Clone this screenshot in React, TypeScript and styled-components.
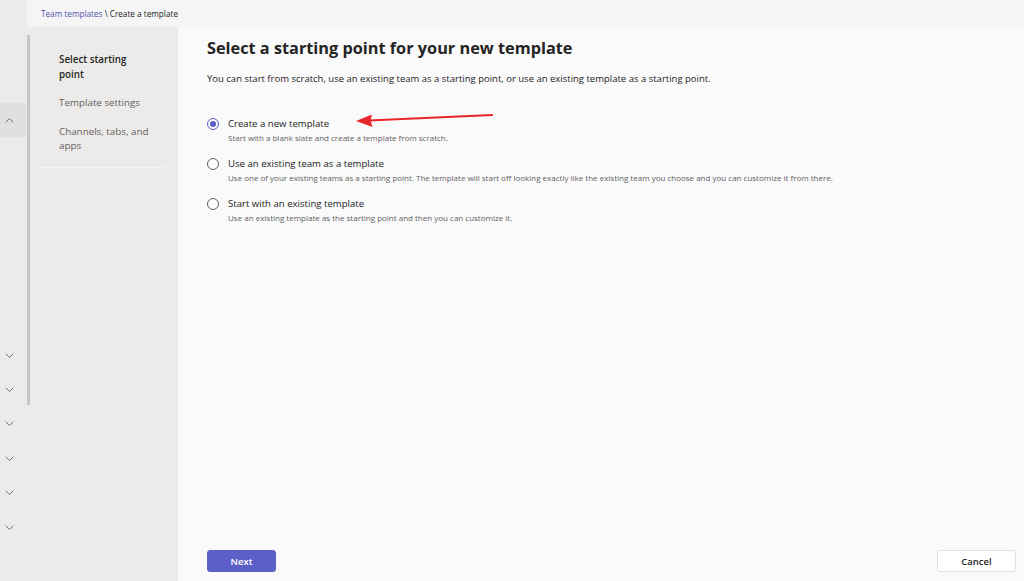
import * as React from 'react'
import styled, { createGlobalStyle } from 'styled-components'

const GlobalStyle = createGlobalStyle`
  html, body {
    margin: 0;
    padding: 0;
    height: 100%;
  }
  #root {
    height: 100%;
  }
  body {
    font-family: "Segoe UI", "Open Sans", "Noto Sans", sans-serif;
    color: #242424;
  }
`

const Page = styled.div`
  display: flex;
  width: 1024px;
  height: 581px;
  overflow: hidden;
  background: #fafafa;
`

const Rail = styled.div`
  width: 27px;
  flex: 0 0 27px;
  background: #ebebeb;
  display: flex;
  flex-direction: column;
`

const RailButton = styled.div<{ $active?: boolean }>`
  height: 34.4px;
  width: 26px;
  display: flex;
  align-items: center;
  justify-content: center;
  padding-right: 8px;
  box-sizing: border-box;
  background: ${p => (p.$active ? '#e0e0e0' : 'transparent')};
`

const RailGap = styled.div<{ $h: number }>`
  height: ${p => p.$h}px;
`

const Column = styled.div`
  flex: 1;
  display: flex;
  flex-direction: column;
`

const Header = styled.div`
  height: 27px;
  flex: 0 0 27px;
  background: #f5f5f5;
  display: flex;
  align-items: center;
  padding-left: 14px;
  font-size: 8.2px;
  color: #242424;
`

const Crumb = styled.span`
  color: #4f52b2;
`

const Body = styled.div`
  flex: 1;
  display: flex;
`

const Track = styled.div`
  width: 3px;
  flex: 0 0 3px;
  background: #edebe9;
`

const Thumb = styled.div`
  margin-top: 8px;
  height: 370px;
  background: #c7c7c7;
`

const Nav = styled.nav`
  width: 148px;
  flex: 0 0 148px;
  background: #edebe9;
  padding-top: 26px;
  box-sizing: border-box;
`

const NavList = styled.div`
  margin: 0 13px 0 10px;
  padding: 0 16px 13px 19px;
  border-bottom: 1px solid #f5f4f3;
  display: flex;
  flex-direction: column;
  gap: 14px;
`

const NavItem = styled.div<{ $current?: boolean }>`
  font-size: 9.8px;
  line-height: 14.5px;
  font-weight: ${p => (p.$current ? 600 : 400)};
  color: ${p => (p.$current ? '#242424' : '#616161')};
`

const Main = styled.main`
  flex: 1;
  display: flex;
  flex-direction: column;
  padding: 10px 8px 9px 29px;
  position: relative;
`

const Title = styled.h1`
  margin: 0;
  font-size: 16.3px;
  line-height: 22px;
  font-weight: 700;
  color: #242424;
`

const Intro = styled.p`
  margin: 13px 0 0;
  font-size: 9.5px;
  line-height: 14px;
  color: #242424;
`

const Options = styled.div`
  margin-top: 30px;
  display: flex;
  flex-direction: column;
  gap: 13px;
`

const Option = styled.label`
  display: grid;
  grid-template-columns: 12px 1fr;
  column-gap: 9px;
  row-gap: 1px;
  align-items: center;
`

const Radio = styled.span<{ $checked?: boolean }>`
  width: 12px;
  height: 12px;
  box-sizing: border-box;
  border-radius: 50%;
  border: 1px solid ${p => (p.$checked ? '#5b5fc7' : '#616161')};
  display: flex;
  align-items: center;
  justify-content: center;
  &::after {
    content: '';
    width: 6px;
    height: 6px;
    border-radius: 50%;
    background: ${p => (p.$checked ? '#5b5fc7' : 'transparent')};
  }
`

const OptionLabel = styled.span`
  font-size: 9.6px;
  line-height: 15px;
  color: #242424;
`

const OptionHint = styled.span`
  grid-column: 2;
  font-size: 8px;
  line-height: 11px;
  color: #616161;
`

const Spacer = styled.div`
  flex: 1;
`

const Footer = styled.div`
  display: flex;
  justify-content: space-between;
  align-items: center;
`

const Button = styled.button<{ $primary?: boolean }>`
  height: 22px;
  min-width: ${p => (p.$primary ? 69 : 79)}px;
  border-radius: 3px;
  font-family: inherit;
  font-size: 9.5px;
  font-weight: 600;
  padding: 0 12px;
  cursor: pointer;
  background: ${p => (p.$primary ? '#5b5fc7' : '#ffffff')};
  color: ${p => (p.$primary ? '#ffffff' : '#242424')};
  border: 1px solid ${p => (p.$primary ? '#5b5fc7' : '#e0e0e0')};
`

const Arrow = styled.svg`
  position: absolute;
  left: 177px;
  top: 86px;
  overflow: visible;
`

const Chevron = ({ up }: { up?: boolean }) => (
  <svg width="9" height="6" viewBox="0 0 9 6" fill="none">
    <path
      d={up ? 'M1 5 L4.5 1.5 L8 5' : 'M1 1 L4.5 4.5 L8 1'}
      stroke="#707070"
      strokeWidth="1"
      strokeLinecap="round"
      strokeLinejoin="round"
    />
  </svg>
)

const options = [
  {
    label: 'Create a new template',
    hint: 'Start with a blank slate and create a template from scratch.',
    checked: true,
  },
  {
    label: 'Use an existing team as a template',
    hint: 'Use one of your existing teams as a starting point. The template will start off looking exactly like the existing team you choose and you can customize it from there.',
  },
  {
    label: 'Start with an existing template',
    hint: 'Use an existing template as the starting point and then you can customize it.',
  },
]

const App: React.FC = () => {
  return (
    <>
      <GlobalStyle />
      <Page>
        <Rail>
          <RailGap $h={103} />
          <RailButton $active>
            <Chevron up />
          </RailButton>
          <RailGap $h={201} />
          {[0, 1, 2, 3, 4, 5].map(i => (
            <RailButton key={i}>
              <Chevron />
            </RailButton>
          ))}
        </Rail>
        <Column>
          <Header>
            <Crumb>Team templates</Crumb>&nbsp;\ Create a template
          </Header>
          <Body>
            <Track>
              <Thumb />
            </Track>
            <Nav>
              <NavList>
                <NavItem $current>Select starting point</NavItem>
                <NavItem>Template settings</NavItem>
                <NavItem>Channels, tabs, and apps</NavItem>
              </NavList>
            </Nav>
            <Main>
              <Title>Select a starting point for your new template</Title>
              <Intro>
                You can start from scratch, use an existing team as a starting point, or use an existing template as a starting point.
              </Intro>
              <Options>
                {options.map(o => (
                  <Option key={o.label}>
                    <Radio $checked={o.checked} />
                    <OptionLabel>{o.label}</OptionLabel>
                    <OptionHint>{o.hint}</OptionHint>
                  </Option>
                ))}
              </Options>
              <Spacer />
              <Footer>
                <Button $primary>Next</Button>
                <Button>Cancel</Button>
              </Footer>
              <Arrow width="140" height="14" viewBox="0 0 140 14">
                <path d="M14 7.5 L137 2" stroke="#e8262a" strokeWidth="2.2" strokeLinecap="round" />
                <path d="M1 8 L17 1.5 L15.5 7.5 L17.5 14 Z" fill="#e8262a" />
              </Arrow>
            </Main>
          </Body>
        </Column>
      </Page>
    </>
  )
}

export default App
